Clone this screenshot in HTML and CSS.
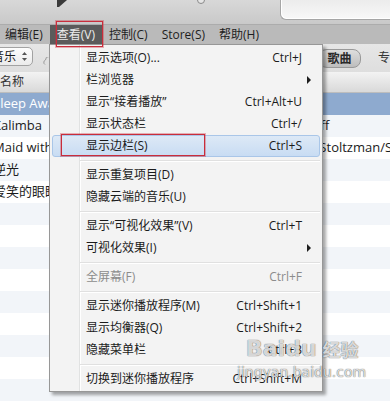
FILE: index.html
```html
<!DOCTYPE html>
<html lang="zh-CN">
<head>
  <meta charset="UTF-8" />
  <title>iTunes - 查看菜单</title>
  <link rel="stylesheet" href="styles.css">
</head>
<body>

  <div class="window">
    <!-- top player bar, mostly cut off -->
    <div class="toolbar">
      <svg class="prev-btn" width="10" height="7" viewBox="0 0 10 7"><polygon points="0,0 10,0 2,7 0,7" fill="#3a3a3a"/></svg>
      <span class="knob"></span>
      <div class="lcd"></div>
    </div>

    <!-- menu bar -->
    <div class="menubar">
      <span class="mb-item">编辑(E)</span>
      <span class="mb-item open">查看(V)</span>
      <span class="mb-item">控制(C)</span>
      <span class="mb-item">Store(S)</span>
      <span class="mb-item">帮助(H)</span>
    </div>

    <!-- library filter bar -->
    <div class="filterbar">
      <div class="select">
        <span>音乐</span>
        <svg width="5" height="9" viewBox="0 0 5 9"><polygon points="2.5,0 5,3 0,3" fill="#555"/><polygon points="0,6 5,6 2.5,9" fill="#555"/></svg>
      </div>
      <svg class="cloud" width="10" height="8" viewBox="0 0 10 8"><path d="M2 7.5 A2.5 2.5 0 0 1 2.5 3 A3.5 3.5 0 0 1 9.5 3" fill="none" stroke="#9a9a9a" stroke-width="1"/></svg>
      <div class="seg">
        <span class="seg-on">歌曲</span>
        <span class="seg-off">专辑</span>
      </div>
    </div>

    <!-- song list -->
    <div class="list">
      <div class="row head"><span class="name">名称</span></div>
      <div class="row sel"><span class="name">Sleep Away</span></div>
      <div class="row"><span class="name">Kalimba</span><span class="artist">Mr. Scruff</span></div>
      <div class="row"><span class="name">Maid with the Flaxen Hair</span><span class="artist">Richard Stoltzman/Slovak Radio</span></div>
      <div class="row"><span class="name">逆光</span></div>
      <div class="row"><span class="name">爱笑的眼睛</span></div>
      <div class="row"></div>
      <div class="row"></div>
      <div class="row"></div>
      <div class="row"></div>
      <div class="row"></div>
      <div class="row"></div>
      <div class="row"></div>
      <div class="row"></div>
      <div class="row"></div>
    </div>
  </div>

  <!-- open "查看" menu -->
  <div class="menu">
    <div class="item"><span>显示选项(O)...</span><span class="key">Ctrl+J</span></div>
    <div class="item"><span>栏浏览器</span><span class="arrow"></span></div>
    <div class="item"><span>显示“接着播放”</span><span class="key">Ctrl+Alt+U</span></div>
    <div class="item"><span>显示状态栏</span><span class="key">Ctrl+/</span></div>
    <div class="item hot"><span>显示边栏(S)</span><span class="key">Ctrl+S</span></div>
    <div class="sep"></div>
    <div class="item"><span>显示重复项目(D)</span></div>
    <div class="item"><span>隐藏云端的音乐(U)</span></div>
    <div class="sep"></div>
    <div class="item"><span>显示“可视化效果”(V)</span><span class="key">Ctrl+T</span></div>
    <div class="item"><span>可视化效果(I)</span><span class="arrow"></span></div>
    <div class="sep"></div>
    <div class="item off"><span>全屏幕(F)</span><span class="key">Ctrl+F</span></div>
    <div class="sep"></div>
    <div class="item"><span>显示迷你播放程序(M)</span><span class="key">Ctrl+Shift+1</span></div>
    <div class="item"><span>显示均衡器(Q)</span><span class="key">Ctrl+Shift+2</span></div>
    <div class="item"><span>隐藏菜单栏</span><span class="key">Ctrl+B</span></div>
    <div class="sep"></div>
    <div class="item"><span>切换到迷你播放程序</span><span class="key">Ctrl+Shift+M</span></div>
  </div>

  <!-- red annotation boxes -->
  <div class="mark mark-bar"></div>
  <div class="mark mark-item"></div>

  <!-- watermark -->
  <div class="watermark">
    <div class="wm-top"><span class="wm-bai">Bai</span><span class="wm-du">du</span><span class="wm-jy">经验</span></div>
    <div class="wm-url">jingyan.baidu.com</div>
  </div>

</body>
</html>
```

FILE: styles.css
```css
/* Global */
* {
  box-sizing: border-box;
  margin: 0;
  padding: 0;
}

body {
  width: 390px;
  height: 410px;
  overflow: hidden;
  position: relative;
  background: #fff;
  font-family: "Open Sans", "Noto Sans CJK SC", sans-serif;
  font-size: 12px;
  color: #1b1b1b;
}

/* Top player bar */
.toolbar {
  height: 24px;
  display: flex;
  align-items: flex-start;
  background: linear-gradient(#d8d8d8, #c9c9c9);
}

.toolbar > * {
  flex-shrink: 0;
}

.prev-btn {
  margin-left: 57px;
}

.knob {
  width: 8px;
  height: 8px;
  margin: -4px 0 0 130px;
  border: 1px solid #8a8a8a;
  border-radius: 50%;
  background: #e6e6e6;
}

.lcd {
  width: 110px;
  height: 20px;
  margin-left: auto;
  border: 1px solid #a6a6a6;
  border-top: none;
  border-right: none;
  border-radius: 0 0 0 6px;
  background: linear-gradient(#ececec, #f8f8f8);
  box-shadow: inset 1px -1px 0 #fff;
}

/* Menu bar */
.menubar {
  height: 20px;
  display: flex;
  margin-left: -2px;
  background: #bababa;
  border-top: 1px solid #acacac;
  line-height: 19px;
}

.mb-item {
  padding: 0 7px;
  color: #1e1e1e;
}

.mb-item.open {
  background: #5b5b5b;
  color: #ececec;
}

/* Filter bar */
.filterbar {
  height: 28px;
  display: flex;
  align-items: flex-start;
  background: linear-gradient(#e6e6e6, #dedede);
}

.filterbar > * {
  flex-shrink: 0;
}

.select {
  width: 45px;
  height: 19px;
  margin: 3px 0 0 -12px;
  padding-left: 3px;
  display: flex;
  align-items: center;
  gap: 6px;
  border: 1px solid #a2a2a2;
  border-radius: 5px;
  background: linear-gradient(#fdfdfd, #ebebeb);
  line-height: 17px;
  white-space: nowrap;
}

.cloud {
  margin: 13px 0 0 10px;
}

.seg {
  display: flex;
  margin: 5px 0 0 265px;
  height: 19px;
  line-height: 17px;
  white-space: nowrap;
}

.seg-on {
  flex-shrink: 0;
  width: 43px;
  text-align: center;
  font-weight: bold;
  color: #2a2a2a;
  border: 1px solid #999;
  border-radius: 9px 8px 8px 9px;
  background: linear-gradient(#dedede, #bdbdbd);
}

.seg-off {
  flex-shrink: 0;
  padding-left: 17px;
  color: #333;
}

/* Song list */
.list {
  font-size: 13px;
}

.row {
  height: 22px;
  display: flex;
  line-height: 21px;
  white-space: nowrap;
  overflow: hidden;
}

.row:nth-child(odd) {
  background: #f2f5f9;
}

.row.head {
  height: 21px;
  line-height: 20px;
  font-size: 12px;
  color: #333;
  background: linear-gradient(#f3f3f3, #d9d9d9);
  border-bottom: 1px solid #bdbdbd;
}

.row.head .name {
  margin-left: 0;
}

.row.sel {
  background: #8eaacf;
  color: #fff;
}

.name {
  flex: 0 0 277px;
  margin-left: -7px;
  overflow: hidden;
}

.artist {
  flex-shrink: 0;
  color: #1b1b1b;
}

/* Drop-down menu */
.menu {
  position: absolute;
  left: 49px;
  top: 44px;
  width: 274px;
  padding: 2px 0 1px;
  border: 1px solid #979797;
  background: linear-gradient(to right, #f3f3f3 0 29px, #e1e2e2 29px 30px, #fff 30px 31px, #f3f3f3 31px);
  box-shadow: 3px 3px 3px rgba(0, 0, 0, 0.35);
}

.item {
  height: 22px;
  margin: 0 2px;
  padding: 0 17px 0 33px;
  display: flex;
  justify-content: space-between;
  align-items: center;
  line-height: 22px;
  border: 1px solid transparent;
  border-radius: 3px;
  white-space: nowrap;
}

.item.hot {
  background: linear-gradient(#dde9f6, #c8dcf3);
  border-color: #a9c6e8;
}

.item.off {
  color: #8c8c8c;
}

.arrow {
  width: 0;
  height: 0;
  margin-right: -9px;
  border-left: 4px solid #1e1e1e;
  border-top: 4px solid transparent;
  border-bottom: 4px solid transparent;
}

.sep {
  height: 7px;
  margin: 0 2px 0 30px;
  background: linear-gradient(transparent 3px, #e0e0e0 3px 4px, #fff 4px 5px, transparent 5px);
}

/* Red annotation boxes */
.mark {
  position: absolute;
  border: 1px solid #c92d3b;
  box-shadow: 0 0 0 1px rgba(201, 45, 59, 0.35);
}

.mark-bar {
  left: 56px;
  top: 21px;
  width: 47px;
  height: 26px;
}

.mark-item {
  left: 61px;
  top: 134px;
  width: 144px;
  height: 22px;
}

/* Watermark */
.watermark {
  position: absolute;
  left: 246px;
  top: 336px;
  color: rgba(255, 255, 255, 0.8);
  text-shadow: 0 0 1px rgba(0, 0, 0, 0.55), 0 0 1px rgba(0, 0, 0, 0.4);
  font-family: "DejaVu Sans", sans-serif;
}

.wm-top {
  display: flex;
  align-items: flex-end;
  font-weight: bold;
  font-size: 22px;
  line-height: 26px;
}

.wm-jy {
  margin-left: 6px;
  font-family: "Noto Sans CJK SC", sans-serif;
  font-size: 18px;
}

.wm-url {
  margin: 2px 0 0 -9px;
  font-size: 14px;
  line-height: 16px;
}
```
